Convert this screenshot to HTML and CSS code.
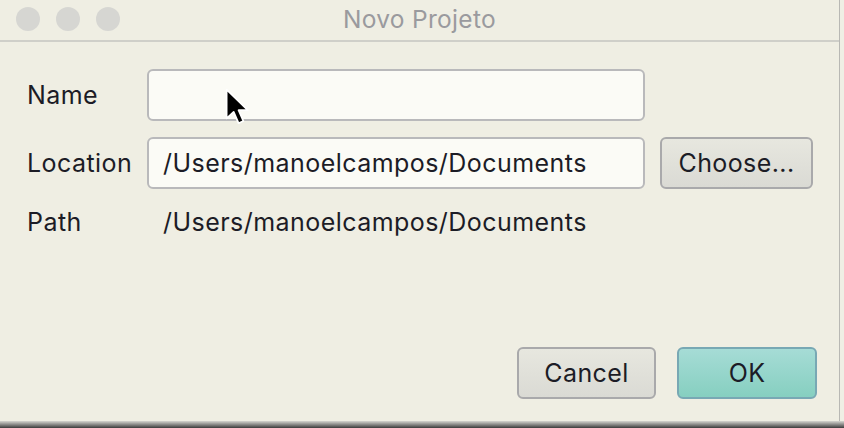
FILE: index.html
```html
<!DOCTYPE html>
<html>
<head>
<meta charset="utf-8">
<link rel="stylesheet" href="styles.css">
</head>
<body>
<div class="screen">
  <div class="window">
    <div class="titlebar">
      <div class="lights">
        <span class="light"></span>
        <span class="light"></span>
        <span class="light"></span>
      </div>
      <div class="title">Novo Projeto</div>
    </div>
    <div class="content">
      <div class="form">
        <div class="label">Name</div>
        <div class="field field-name">
          <svg class="cursor" width="26" height="39" viewBox="0 0 24 36">
            <path d="M1.5 1.5 L1.5 28 L8 22 L12.5 32.5 L17 30.5 L12.5 20.5 L21 20.5 Z" fill="#000" stroke="#fff" stroke-width="1.6" stroke-linejoin="round"/>
          </svg>
        </div>
        <div></div>
        <div class="label">Location</div>
        <div class="field">/Users/manoelcampos/Documents</div>
        <button class="btn choose">Choose...</button>
        <div class="label path-row">Path</div>
        <div class="value path-row">/Users/manoelcampos/Documents</div>
        <div></div>
      </div>
      <div class="actions">
        <button class="btn cancel">Cancel</button>
        <button class="btn ok">OK</button>
      </div>
    </div>
  </div>
  <div class="shadow"></div>
</div>
</body>
</html>
```
FILE: styles.css
```css
html, body {
  margin: 0;
  padding: 0;
  background: #efefe4;
}
.screen {
  width: 844px;
  height: 428px;
  display: flex;
  flex-direction: column;
  overflow: hidden;
  font-family: Inter, "Noto Sans", sans-serif;
  color: #1c1c26;
}
.window {
  width: 840px;
  height: 421px;
  background: #efeee3;
  border-right: 1px solid #b8b8b4;
  display: flex;
  flex-direction: column;
  box-sizing: border-box;
}
.titlebar {
  height: 42px;
  flex: none;
  box-sizing: border-box;
  border-bottom: 2px solid #cfcfc9;
  display: flex;
  align-items: center;
  position: relative;
}
.lights {
  display: flex;
  gap: 16px;
  padding-left: 16px;
  padding-bottom: 2px;
}
.light {
  width: 24px;
  height: 24px;
  border-radius: 50%;
  background: #d6d6d2;
}
.title {
  position: absolute;
  left: 0;
  right: 0;
  top: 4px;
  text-align: center;
  font-size: 24.5px;
  color: #9a9a9e;
  letter-spacing: 0.3px;
}
.content {
  flex: 1;
  display: flex;
  flex-direction: column;
  justify-content: space-between;
  padding: 27px 22px 22px 27px;
}
.form {
  display: grid;
  grid-template-columns: 105px 498px 153px;
  grid-template-rows: 52px 52px 40px;
  column-gap: 15px;
  row-gap: 16px;
  align-items: center;
}
.label {
  font-size: 25px;
  letter-spacing: 0.45px;
}
.field {
  height: 52px;
  box-sizing: border-box;
  border: 2px solid #b9b9bb;
  border-radius: 6px;
  background: #fbfbf6;
  padding-left: 14px;
  display: flex;
  align-items: center;
  font-size: 25px;
  letter-spacing: 0.45px;
}
.field-name {
  position: relative;
}
.cursor {
  position: absolute;
  left: 76px;
  top: 17px;
}
.value {
  padding-left: 16px;
  font-size: 25px;
  letter-spacing: 0.45px;
}
.path-row {
  margin-top: -6px;
}
.btn {
  font-family: Inter, "Noto Sans", sans-serif;
  font-size: 25px;
  color: #1c1c26;
  height: 52px;
  box-sizing: border-box;
  border: 2px solid #a9a9ab;
  border-radius: 6px;
  background: linear-gradient(#e7e7df, #dadad4);
  padding: 0;
  letter-spacing: 0.4px;
}
.choose {
  width: 153px;
}
.actions {
  display: flex;
  justify-content: flex-end;
  gap: 21px;
}
.cancel {
  width: 139px;
}
.ok {
  width: 140px;
  background: linear-gradient(#a6dcd6, #86cfc0);
  border-color: #78a8b4;
}
.shadow {
  flex: 1;
  background: linear-gradient(#d6d6d0, #8a8a88 50%, #3c3c3c);
}
```
